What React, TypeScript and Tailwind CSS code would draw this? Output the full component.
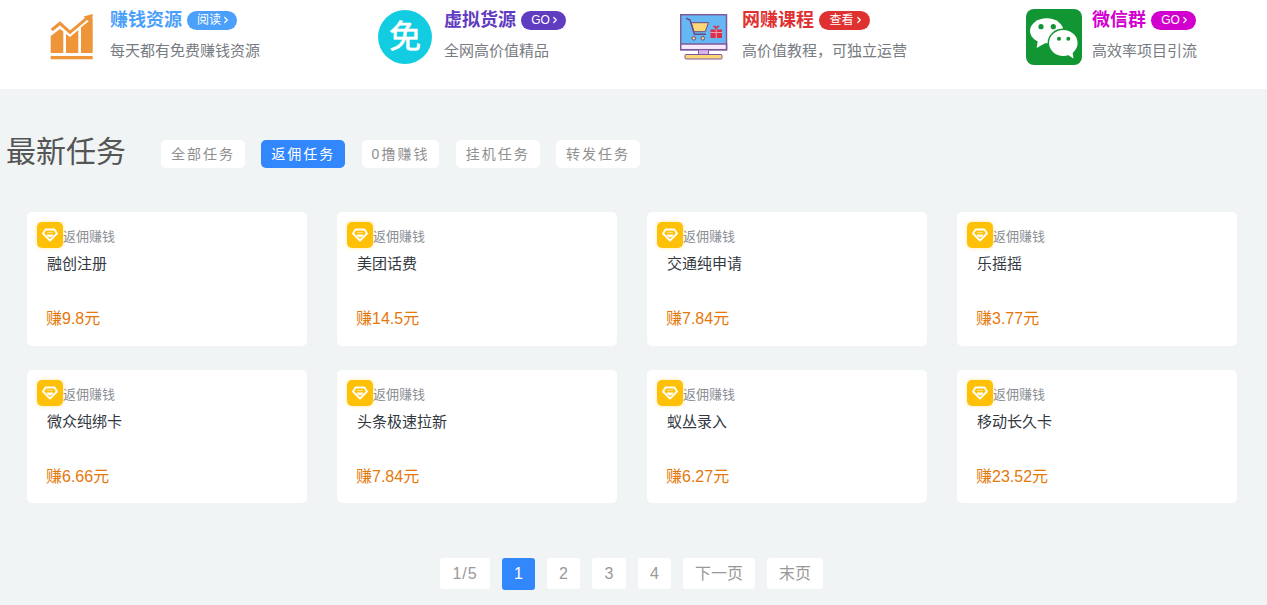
import { ChevronRight } from "lucide-react";
import type { ReactNode } from "react";

const font = "font-['Liberation_Sans','Noto_Sans_CJK_SC',sans-serif]";

function TrendIcon() {
  return (
    <svg width="44" height="46" viewBox="0 0 44 46" className="shrink-0 mt-[14px]">
      <path d="M1.700 16L10 9.300L20 18.300L36.700 4.300" fill="none" stroke="#ee9539" strokeWidth="3" />
      <path d="M33.500 2.500L43 0L41 9.500Z" fill="#ee9539" />
      <path d="M0.700 22L10 15L13.300 17.500V39H0.700Z" fill="#ee9539" />
      <path d="M16 20L20 23L28.300 16V39H16Z" fill="#ee9539" />
      <path d="M31 13.500L42.700 4V39H31Z" fill="#ee9539" />
      <rect x="0.700" y="42" width="42" height="3.300" fill="#ee9539" />
    </svg>
  );
}

function FreeIcon() {
  return (
    <div className="w-[54px] h-[54px] mt-[10px] rounded-full bg-[#12cde2] flex items-center justify-center shrink-0">
      <span className="text-white text-[32px] leading-none [-webkit-text-stroke:0.7px_white]">免</span>
    </div>
  );
}

function ScreenIcon() {
  return (
    <svg width="48" height="46" viewBox="0 0 48 46" className="shrink-0 mt-[14px]">
      <rect x="0.700" y="0.700" width="45.800" height="35" fill="#66b8f5" stroke="#7d5a9c" strokeWidth="1.500" />
      <rect x="0.700" y="30" width="45.800" height="5.700" fill="#f6e9fb" stroke="#7d5a9c" strokeWidth="1.500" />
      <rect x="18.500" y="35.700" width="10" height="4.800" fill="#dcb3ec" stroke="#7d5a9c" />
      <rect x="5" y="40.500" width="37" height="4.500" rx="1" fill="#fbd77a" stroke="#7d5a9c" />
      <path d="M11.200 8.700H28.500L25.200 17.700H13.800Z" fill="#fbd77a" stroke="#6b4a7e" />
      <path d="M6.200 4.300L10 6L14.500 20.300H26" fill="none" stroke="#6b4a7e" strokeWidth="1.500" />
      <circle cx="13.800" cy="24.300" r="1.800" fill="#fbd77a" stroke="#6b4a7e" />
      <circle cx="22.800" cy="24.300" r="1.800" fill="#fbd77a" stroke="#6b4a7e" />
      <rect x="30.500" y="15.500" width="11.500" height="8.500" fill="#d8324a" />
      <path d="M36.200 15.500V24M30.500 18.500H42" stroke="#f49cad" />
      <path d="M36.200 15L33 12H35.500L36.200 15L37 12H39.500Z" fill="#d8324a" stroke="#d8324a" strokeWidth="0.500" />
    </svg>
  );
}

function WechatIcon() {
  return (
    <div className="w-14 h-14 mt-[9px] rounded-lg bg-[#129633] shrink-0">
      <svg width="56" height="56" viewBox="0 0 56 56">
        <ellipse cx="20.700" cy="21.800" rx="16.700" ry="12.500" fill="#fff" />
        <path d="M12 30L10.700 39L21 33Z" fill="#fff" />
        <ellipse cx="37.300" cy="34" rx="15" ry="13.700" fill="#fff" stroke="#129633" strokeWidth="1.500" />
        <path d="M42 46L47.500 49.500L46.500 43Z" fill="#fff" />
        <circle cx="15" cy="17.700" r="2.600" fill="#129633" />
        <circle cx="27.300" cy="17.700" r="2.600" fill="#129633" />
        <circle cx="33" cy="29.700" r="2" fill="#129633" />
        <circle cx="42.300" cy="29.700" r="2" fill="#129633" />
      </svg>
    </div>
  );
}

function Promo({
  icon,
  title,
  badge,
  desc,
  text,
  bg,
  width,
  gap,
  badgeW,
}: {
  icon: ReactNode;
  title: string;
  badge: string;
  desc: string;
  text: string;
  bg: string;
  width: string;
  gap: string;
  badgeW: string;
}) {
  return (
    <div className={`flex items-start ${width} ${gap}`}>
      {icon}
      <div className="pt-[10px]">
        <div className="flex items-center gap-[5px] h-[20px]">
          <span className={`text-[18px] leading-[20px] font-bold ${text}`}>{title}</span>
          <span className={`h-[19px] rounded-full pl-[4px] flex items-center justify-center text-white text-[12px] ${bg} ${badgeW}`}>
            {badge}
            <ChevronRight size={10} strokeWidth={3} />
          </span>
        </div>
        <p className="mt-[11px] text-[15px] leading-[20px] text-[#777b82]">{desc}</p>
      </div>
    </div>
  );
}

const tabs = [
  { label: "全部任务", active: false },
  { label: "返佣任务", active: true },
  { label: "0撸赚钱", active: false },
  { label: "挂机任务", active: false },
  { label: "转发任务", active: false },
];

const tasks = [
  { name: "融创注册", pay: "赚9.8元" },
  { name: "美团话费", pay: "赚14.5元" },
  { name: "交通纯申请", pay: "赚7.84元" },
  { name: "乐摇摇", pay: "赚3.77元" },
  { name: "微众纯绑卡", pay: "赚6.66元" },
  { name: "头条极速拉新", pay: "赚7.84元" },
  { name: "蚁丛录入", pay: "赚6.27元" },
  { name: "移动长久卡", pay: "赚23.52元" },
];

const pages = [
  { label: "1/5", w: "w-[50px] tracking-[1px]" },
  { label: "1", w: "w-[33px]", active: true },
  { label: "2", w: "w-[33px]" },
  { label: "3", w: "w-[34px]" },
  { label: "4", w: "w-[33px]" },
  { label: "下一页", w: "w-[72px]" },
  { label: "末页", w: "w-[56px]" },
];

function TaskCard({ name, pay }: { name: string; pay: string }) {
  return (
    <div className="relative h-[133.5px] bg-white rounded-[5px] pl-[20px] pt-[16px]">
      <div className="absolute left-[10px] top-[10px] w-[26px] h-[26px] rounded-[5px] bg-[#ffc107] shadow-[0_0_4px_rgba(255,193,7,0.35)] flex items-center justify-center">
        <svg width="16" height="14" viewBox="0 0 16 14">
          <path d="M3.500 1.500H12.500L15 5.500L8 12.500L1 5.500Z" fill="none" stroke="#fff" strokeWidth="1.800" strokeLinejoin="round" />
          <path d="M5 6.500H11V8L8 9.500L5 8Z" fill="#fff" />
          <path d="M5.500 4.500H6.500M7.500 4.500H8.500M9.500 4.500H10.500" stroke="#fff" />
        </svg>
      </div>
      <p className="pl-[16px] text-[13px] leading-[18px] text-[#8a8e94]">返佣赚钱</p>
      <p className="mt-[8px] text-[15px] leading-[20px] text-[#33383f]">{name}</p>
      <p className="mt-[34px] -ml-[1px] text-[16px] leading-[22px] text-[#e5780b]">{pay}</p>
    </div>
  );
}

export default function App() {
  return (
    <main className={`min-h-[605px] bg-[#f0f4f5] overflow-hidden ${font}`}>
      <header className="h-[89px] bg-white flex pl-[50px] items-start">
        <Promo icon={<TrendIcon />} title="赚钱资源" badge="阅读" desc="每天都有免费赚钱资源" text="text-[#4ba0fb]" bg="bg-[#4ba0fb]" badgeW="w-[50px]" width="w-[328px]" gap="gap-[16px]" />
        <Promo icon={<FreeIcon />} title="虚拟货源" badge="GO" desc="全网高价值精品" text="text-[#5f3cc0]" bg="bg-[#5f3cc0]" badgeW="w-[45px]" width="w-[302px]" gap="gap-[12px]" />
        <Promo icon={<ScreenIcon />} title="网赚课程" badge="查看" desc="高价值教程，可独立运营" text="text-[#e03131]" bg="bg-[#e03131]" badgeW="w-[51px]" width="w-[346px]" gap="gap-[14px]" />
        <Promo icon={<WechatIcon />} title="微信群" badge="GO" desc="高效率项目引流" text="text-[#d200ce]" bg="bg-[#d200ce]" badgeW="w-[45px]" width="w-[241px]" gap="gap-[10px]" />
      </header>

      <section className="flex items-start pl-[6px] pt-[45px]">
        <h2 className="text-[30px] leading-[36px] font-normal text-[#555] w-[155px]">最新任务</h2>
        <div className="flex gap-[16.3px] mt-[6px]">
          {tabs.map((t) => (
            <button
              key={t.label}
              className={`h-[28px] px-[10px] rounded-[5px] text-[14px] tracking-[2px] ${
                t.active ? "bg-[#3287fd] text-white" : "bg-white text-[#8f8f8f]"
              }`}
            >
              {t.label}
            </button>
          ))}
        </div>
      </section>

      <section className="grid grid-cols-[repeat(4,280px)] gap-x-[30px] gap-y-[24.4px] pl-[27px] mt-[42px]">
        {tasks.map((t) => (
          <TaskCard key={t.name} name={t.name} pay={t.pay} />
        ))}
      </section>

      <nav className="flex justify-center items-start gap-[12px] mt-[54.6px] pr-[4px]">
        {pages.map((p) => (
          <span
            key={p.label}
            className={`${p.w} rounded-[3px] flex items-center justify-center text-[16px] pt-[1px] ${
              p.active ? "h-[32px] bg-[#3287fd] text-white" : "h-[31px] bg-white text-[#999]"
            }`}
          >
            {p.label}
          </span>
        ))}
      </nav>
    </main>
  );
}
